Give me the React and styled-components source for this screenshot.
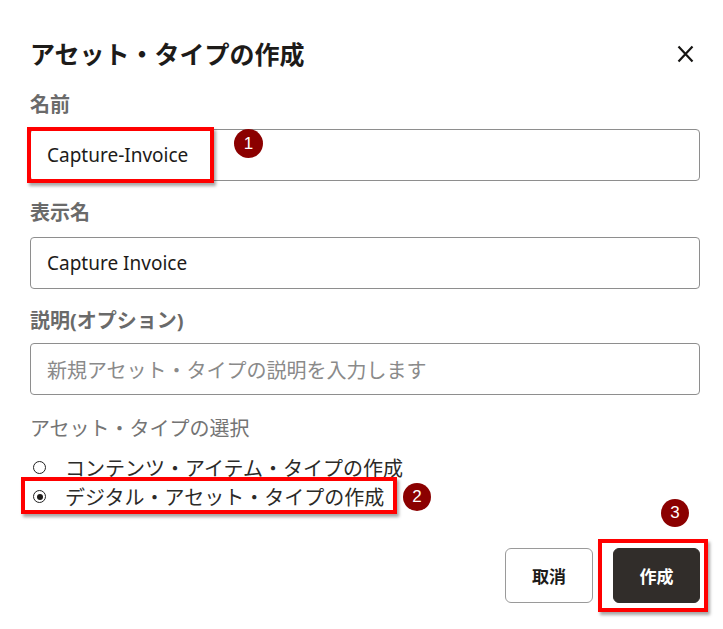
import React from 'react';
import styled, { createGlobalStyle } from 'styled-components';

const GlobalStyle = createGlobalStyle`
  html, body {
    margin: 0;
    padding: 0;
    background: #fff;
  }
  body {
    font-family: "Noto Sans", "Noto Sans CJK JP", sans-serif;
    color: #161513;
  }
`;

const Dialog = styled.div`
  width: 723px;
  height: 629px;
  box-sizing: border-box;
  padding: 38px 23px 0 30px;
  display: flex;
  flex-direction: column;
`;

const Header = styled.div`
  display: flex;
  align-items: center;
  justify-content: space-between;
  height: 32px;
  margin-bottom: 23px;
`;

const Title = styled.h1`
  margin: 0;
  font-size: 25px;
  line-height: 32px;
  font-weight: 700;
  color: #1d1b19;
`;

const CloseButton = styled.button`
  border: 0;
  background: none;
  padding: 0;
  margin-right: 6px;
  width: 18px;
  height: 20px;
  display: flex;
  align-items: center;
  justify-content: center;
  cursor: pointer;
`;

const Field = styled.div`
  display: flex;
  flex-direction: column;
  margin-bottom: ${p => p.$gap ?? 20}px;
`;

const Label = styled.label`
  font-size: 20px;
  line-height: 24px;
  font-weight: ${p => (p.$light ? 400 : 700)};
  color: ${p => (p.$light ? '#747474' : '#6a6a6a')};
  margin-bottom: ${p => p.$space ?? 12}px;
`;

const InputWrap = styled.div`
  position: relative;
`;

const Input = styled.div`
  box-sizing: border-box;
  height: 52px;
  border: 1px solid #8e8e8e;
  border-radius: 4px;
  padding: 0 16px;
  display: flex;
  align-items: center;
  font-size: ${p => (p.$placeholder ? 20 : 19)}px;
  color: ${p => (p.$placeholder ? '#8a8a8a' : '#1d1b19')};
`;

const Highlight = styled.div`
  position: absolute;
  box-sizing: border-box;
  border: 4px solid #ff0000;
  box-shadow: 2px 3px 3px rgba(0, 0, 0, 0.35);
  pointer-events: none;
`;

const Badge = styled.div`
  position: absolute;
  width: ${p => p.$size || 28}px;
  height: ${p => p.$size || 28}px;
  border-radius: 50%;
  background: #8b0000;
  color: #fff;
  font-family: "Liberation Sans", Arial, sans-serif;
  font-size: 17px;
  display: flex;
  align-items: center;
  justify-content: center;
`;

const RadioGroup = styled.div`
  display: flex;
  flex-direction: column;
`;

const RadioRow = styled.div`
  position: relative;
  height: 29px;
  display: flex;
  align-items: center;
  padding-left: 3px;
  font-size: 20px;
  color: #2b2a28;
`;

const RadioCircle = styled.span`
  box-sizing: border-box;
  width: 13px;
  height: 13px;
  border: 1.5px solid #222;
  border-radius: 50%;
  margin-right: 19px;
  display: flex;
  align-items: center;
  justify-content: center;
  flex-shrink: 0;

  &::after {
    content: '';
    width: 6px;
    height: 6px;
    border-radius: 50%;
    background: ${p => (p.$checked ? '#1d1b19' : 'transparent')};
  }
`;

const Footer = styled.div`
  display: flex;
  justify-content: flex-end;
  gap: 20px;
  margin-top: 37px;
`;

const ButtonWrap = styled.div`
  position: relative;
`;

const Button = styled.button`
  box-sizing: border-box;
  width: ${p => p.$width || 88}px;
  height: 55px;
  border-radius: 6px;
  border: 1px solid ${p => (p.$primary ? '#312d2a' : '#9a9a9a')};
  background: ${p => (p.$primary ? '#312d2a' : '#fff')};
  color: ${p => (p.$primary ? '#fff' : '#1d1b19')};
  font-family: "Noto Sans CJK JP", sans-serif;
  font-size: 17px;
  font-weight: 700;
  cursor: pointer;
`;

const CloseIcon = () => (
  <svg width="17" height="18" viewBox="0 0 17 18">
    <path d="M1.5 1.5 L15.5 16.5 M15.5 1.5 L1.5 16.5" stroke="#161513" strokeWidth="2.2" fill="none" />
  </svg>
);

export default function App() {
  return (
    <>
      <GlobalStyle />
      <Dialog>
        <Header>
          <Title>アセット・タイプの作成</Title>
          <CloseButton aria-label="閉じる">
            <CloseIcon />
          </CloseButton>
        </Header>

        <Field>
          <Label>名前</Label>
          <InputWrap>
            <Input>Capture-Invoice</Input>
            <Highlight style={{ left: -3, top: -2, width: 187, height: 56 }} />
            <Badge $size={29} style={{ left: 204, top: 0 }}>1</Badge>
          </InputWrap>
        </Field>

        <Field>
          <Label>表示名</Label>
          <InputWrap>
            <Input>Capture Invoice</Input>
          </InputWrap>
        </Field>

        <Field $gap={22}>
          <Label $space={10}>説明(オプション)</Label>
          <InputWrap>
            <Input $placeholder>新規アセット・タイプの説明を入力します</Input>
          </InputWrap>
        </Field>

        <Field $gap={0}>
          <Label $light>アセット・タイプの選択</Label>
          <RadioGroup>
            <RadioRow>
              <RadioCircle />
              コンテンツ・アイテム・タイプの作成
            </RadioRow>
            <RadioRow>
              <RadioCircle $checked />
              デジタル・アセット・タイプの作成
              <Highlight style={{ left: -9, top: -5, width: 376, height: 37 }} />
              <Badge style={{ left: 373, top: 1 }}>2</Badge>
            </RadioRow>
          </RadioGroup>
        </Field>

        <Footer>
          <Button>取消</Button>
          <ButtonWrap>
            <Button $primary $width={87}>作成</Button>
            <Highlight style={{ left: -15, top: -9, width: 110, height: 73 }} />
            <Badge style={{ left: 48, top: -49 }}>3</Badge>
          </ButtonWrap>
        </Footer>
      </Dialog>
    </>
  );
}
